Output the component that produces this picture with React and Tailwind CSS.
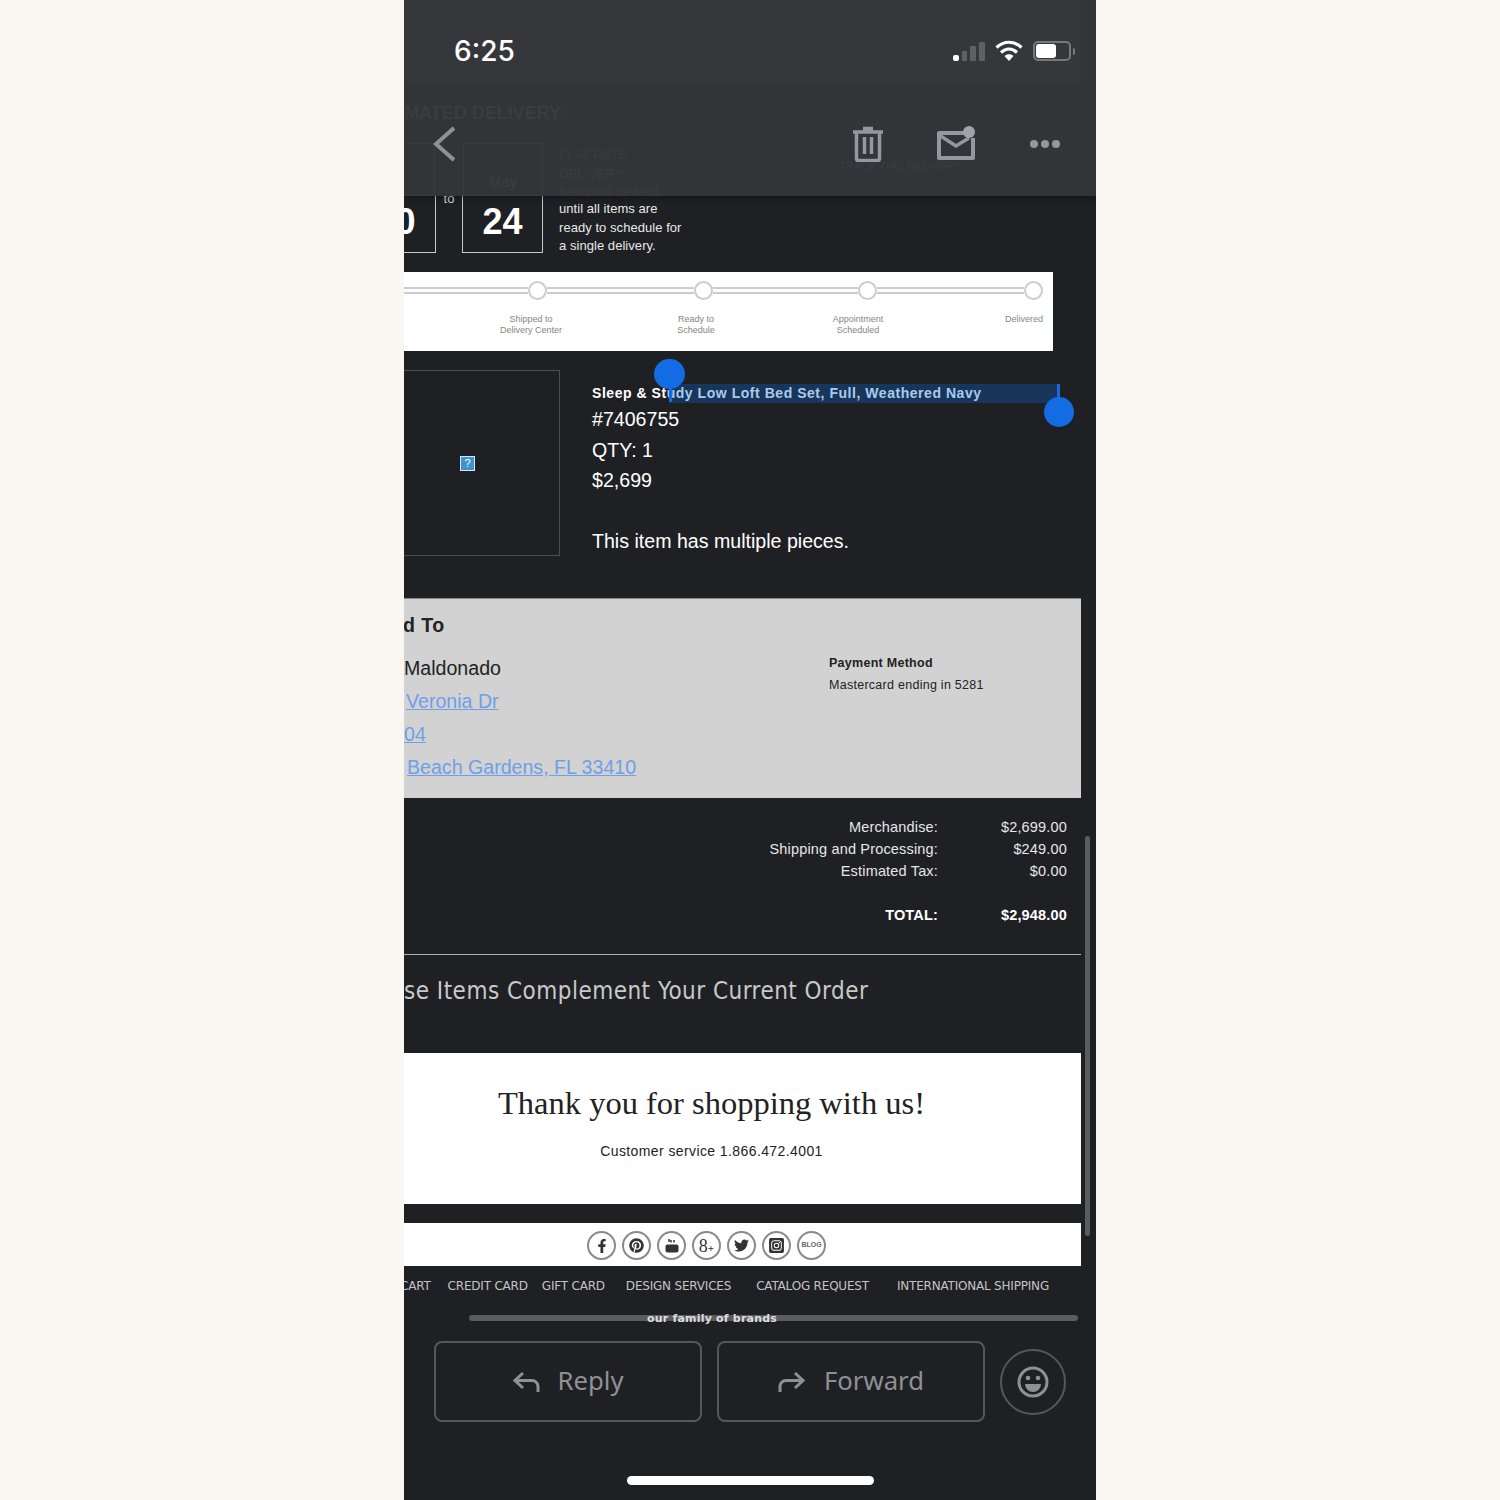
import React from 'react';
import {FaFacebookF, FaPinterest, FaTwitter, FaInstagramSquare} from 'react-icons/fa';

const arial = 'font-["Liberation_Sans",Arial,sans-serif]';

function StatusIcons() {
    return (
        <div className="flex items-end mb-[2px]">
            <div className="flex items-end gap-[3px] h-[20px]">
                <div className="w-[6px] h-[6px] rounded-[2px] bg-white"/>
                <div className="w-[5px] h-[10px] rounded-[1px] bg-[#5f6064]"/>
                <div className="w-[6px] h-[15px] rounded-[1px] bg-[#5f6064]"/>
                <div className="w-[6px] h-[19px] rounded-[1px] bg-[#5f6064]"/>
            </div>
            <svg width="28" height="21" viewBox="0 0 28 21" className="ml-[10px]">
                <path d="M1.500 7.500C9 .5 19 .5 26.500 7.500" fill="none" stroke="#fff" strokeWidth="3.200"/>
                <path d="M6 12.500C11 8 17 8 22 12.500" fill="none" stroke="#fff" strokeWidth="3.200"/>
                <path d="M9.500 16 14 21l4.500-5c-2.600-2.200-6.400-2.200-9 0z" fill="#fff"/>
            </svg>
            <div className="ml-[10px] w-[38px] h-[20px] rounded-[5px] border-2 border-[#77787c] p-[1px]">
                <div className="w-[20px] h-full rounded-[3px] bg-white"/>
            </div>
            <div className="ml-[2px] mb-[6px] w-[2px] h-[7px] rounded-r-sm bg-[#77787c]"/>
        </div>
    );
}

function Header() {
    return (
        <header className="relative h-[196px] shrink-0 bg-[#323438] shadow-[0_2px_6px_rgba(0,0,0,0.35)] z-10">
            {/* what scrolled under the bar shows through very faintly */}
            <div className={`absolute left-0 top-[100px] text-[18px] leading-[26px] font-bold text-[#3a3c40] ${arial}`}>MATED DELIVERY:</div>
            <div className="absolute left-[-20px] top-[143px] w-[51px] h-[53px] border border-[#393b3f]"/>
            <div className={`absolute left-[59px] top-[143px] w-[80px] h-[53px] border border-[#393b3f] text-center text-[15px] text-[#3d3f43] pt-[27px] ${arial}`}>May</div>
            <div className={`absolute left-[155px] top-[146px] text-[13px] leading-[18.5px] text-[#3a3c40] ${arial}`}>
                FLAT RATE<br/>DELIVERY:<br/>Items will be held
            </div>
            <div className={`absolute left-[435px] top-[158px] text-[11px] text-[#3a3c40] ${arial}`}>TRACK THIS DELIVERY</div>

            <div className="relative flex items-center justify-between w-[677px] h-[82px] pl-[50px] pr-[6px] pt-[20px] bg-[#36373b]">
                <span className='text-[28px] font-medium text-white font-["Inter",sans-serif]'>6:25</span>
                <StatusIcons/>
            </div>
            <div className="relative flex items-center h-[114px] pt-[10px] pl-[28px] pr-[36px]">
                <svg width="26" height="38" viewBox="0 0 26 38">
                    <path d="M22 3 4 19l18 16" fill="none" stroke="#8f9094" strokeWidth="4"/>
                </svg>
                <svg width="32" height="36" viewBox="0 0 32 36" className="ml-auto">
                    <path d="M11 2.500h10M1 6h30" stroke="#96979c" strokeWidth="3.500"/>
                    <path d="M4.500 7v25.500a2 2 0 0 0 2 2h19a2 2 0 0 0 2-2V7" fill="none" stroke="#96979c" strokeWidth="3.500"/>
                    <path d="M12.500 11v17M19.500 11v17" stroke="#96979c" strokeWidth="3.500"/>
                </svg>
                <svg width="38" height="34" viewBox="0 0 38 34" className="ml-[53px] mt-[-2px]">
                    <path d="M28 7H2v25h34V12" fill="none" stroke="#96979c" strokeWidth="4" strokeLinejoin="round"/>
                    <path d="M2 9l17 11 13-8" fill="none" stroke="#96979c" strokeWidth="3.500"/>
                    <circle cx="32" cy="6" r="6" fill="#a2a3a8"/>
                </svg>
                <div className="flex gap-[3px] ml-[55px]">
                    <div className="w-[8px] h-[8px] rounded-full bg-[#96979c]"/>
                    <div className="w-[8px] h-[8px] rounded-full bg-[#96979c]"/>
                    <div className="w-[8px] h-[8px] rounded-full bg-[#96979c]"/>
                </div>
            </div>
        </header>
    );
}

function DeliveryRow() {
    return (
        <div className={`flex h-[57px] shrink-0 text-white ${arial}`}>
            <div className="flex items-center justify-center w-[81px] ml-[-49px] pl-[20px] pb-[5px] border-x border-b border-[#c9c9c9] text-[36px] font-bold">0</div>
            <div className="w-[26px] mt-[-6px] text-center text-[13px] leading-[18px] text-[#cfcfcf]">to</div>
            <div className="flex items-center justify-center w-[81px] pb-[5px] border-x border-b border-[#c9c9c9] text-[36px] font-bold">24</div>
            <div className="ml-[16px] pt-[4px] text-[13px] leading-[18.5px] tracking-[0.05px] text-[#e8e8e8]">
                until all items are<br/>ready to schedule for<br/>a single delivery.
            </div>
        </div>
    );
}

function ProgressCard() {
    const dot = 'w-[19px] h-[19px] shrink-0 rounded-full border-2 border-[#cccccc] bg-white';
    const rail = 'h-[7px] border-y-2 border-[#cccccc]';
    return (
        <div className={`mt-[19px] h-[79px] w-[649px] shrink-0 bg-white pt-[9px] text-[9px] leading-[10.5px] text-[#858585] ${arial}`}>
            <div className="flex items-center pr-[10px]">
                <div className={`${rail} w-[124px]`}/>
                <div className={dot}/>
                <div className={`${rail} w-[147px]`}/>
                <div className={dot}/>
                <div className={`${rail} w-[146px]`}/>
                <div className={dot}/>
                <div className={`${rail} w-[147px]`}/>
                <div className={dot}/>
            </div>
            <div className="flex mt-[14px] text-center">
                <div className="w-[100px] ml-[77px]">Shipped to<br/>Delivery Center</div>
                <div className="w-[100px] ml-[65px]">Ready to<br/>Schedule</div>
                <div className="w-[100px] ml-[62px]">Appointment<br/>Scheduled</div>
                <div className="w-[100px] ml-[35px] text-right">Delivered</div>
            </div>
        </div>
    );
}

function ItemRow() {
    return (
        <div className={`relative flex mt-[19px] h-[186px] shrink-0 text-white ${arial}`}>
            {/* selection band goes under the title */}
            <div className="absolute left-[265px] top-[14px] w-[390px] h-[19px] bg-[#17365a]"/>
            <div className="flex items-center justify-center w-[156px] h-full border-y border-r border-[#4c4d50] pr-[28px]">
                <div className="flex items-center justify-center w-[15px] h-[15px] border border-[#d8e6f2] bg-[#3f94cf] text-[11px] leading-none text-white">?</div>
            </div>
            <div className="relative ml-[32px]">
                <div className="mt-[14px] h-[18px] text-[14px] leading-[18px] font-bold tracking-[0.54px]">
                    Sleep &amp; St<span className="text-[#a9cbef]">udy Low Loft Bed Set, Full, Weathered Navy</span>
                </div>
                <div className="mt-[2px] text-[19.6px] leading-[30.5px]">#7406755<br/>QTY: 1<br/>$2,699</div>
                <div className="mt-[30px] text-[19.6px] leading-[30px]">This item has multiple pieces.</div>
            </div>
            {/* drag handles of the selection */}
            <div className="absolute left-[265px] top-[4px] w-[3px] h-[28px] bg-[#136ce3]"/>
            <div className="absolute left-[250px] top-[-11px] w-[31px] h-[30px] rounded-full bg-[#136ce3]"/>
            <div className="absolute left-[653px] top-[14px] w-[3px] h-[22px] bg-[#136ce3]"/>
            <div className="absolute left-[640px] top-[27px] w-[30px] h-[30px] rounded-full bg-[#136ce3]"/>
        </div>
    );
}

function ShipPanel() {
    const link = 'text-[#6f9fe8] underline';
    return (
        <div className={`flex mt-[42px] h-[200px] w-[677px] shrink-0 bg-[#d2d2d2] border-t border-[#8a8a8a] text-[#222] ${arial}`}>
            <div className="w-[425px] text-[19.6px] leading-[33px]">
                <div className="mt-[10px] ml-[-1px] font-bold leading-[33px] tracking-[0.45px]">d To</div>
                <div className="mt-[10px]">Maldonado</div>
                <div className={`pl-[2px] ${link}`}>Veronia Dr</div>
                <div className={link}>04</div>
                <div className={`pl-[3px] ${link}`}>Beach Gardens, FL 33410</div>
            </div>
            <div className="pt-[53px] text-[12.5px] leading-[22px] tracking-[0.27px]">
                <div className="font-bold">Payment Method</div>
                <div>Mastercard ending in 5281</div>
            </div>
        </div>
    );
}

function Totals() {
    const rows = [
        ['Merchandise:', '$2,699.00'],
        ['Shipping and Processing:', '$249.00'],
        ['Estimated Tax:', '$0.00'],
    ];
    return (
        <div className={`pt-[18px] pr-[29px] shrink-0 text-[14.5px] leading-[22px] tracking-[0.17px] text-[#e6e6e6] ${arial}`}>
            {rows.map(([label, value]) => (
                <div key={label} className="grid grid-cols-[1fr_129px] text-right">
                    <span>{label}</span>
                    <span>{value}</span>
                </div>
            ))}
            <div className="grid grid-cols-[1fr_129px] text-right mt-[22px] font-bold text-white">
                <span>TOTAL:</span>
                <span>$2,948.00</span>
            </div>
        </div>
    );
}

function SocialIcon({children}) {
    return (
        <div className="flex items-center justify-center w-[29px] h-[29px] rounded-full border-2 border-[#8a8a8a] text-[#333]">
            {children}
        </div>
    );
}

function SocialBar() {
    return (
        <div className="flex items-center h-[43px] w-[677px] mt-[19px] pt-[2px] shrink-0 bg-white pl-[183px] gap-[6px]">
            <SocialIcon><FaFacebookF size={14}/></SocialIcon>
            <SocialIcon><FaPinterest size={15}/></SocialIcon>
            <SocialIcon>
                <svg width="16" height="16" viewBox="0 0 16 16">
                    <path d="M5 1v3M7 2v2.500M10 2v2.500" stroke="#333" strokeWidth="1.500"/>
                    <rect x="1.500" y="6.500" width="13" height="8" rx="2" fill="#333"/>
                </svg>
            </SocialIcon>
            <SocialIcon>
                <span className='text-[18px] leading-none font-["Liberation_Serif",serif]'>8<span className="text-[11px] font-bold">+</span></span>
            </SocialIcon>
            <SocialIcon><FaTwitter size={15}/></SocialIcon>
            <SocialIcon><FaInstagramSquare size={17}/></SocialIcon>
            <SocialIcon><span className={`text-[7px] font-bold text-[#666] ${arial}`}>BLOG</span></SocialIcon>
        </div>
    );
}

function ActionButton({label, flip}) {
    return (
        <div className={`flex items-center justify-center w-[268px] h-[81px] rounded-lg border-2 border-[#56575b] text-[25.7px] text-[#8f9094] font-["Noto_Sans",sans-serif] ${flip ? 'gap-[19px]' : 'gap-[18px]'}`}>
            <svg width="27" height="22" viewBox="0 0 27 22" className={flip ? '-scale-x-100' : ''}>
                <path d="M10 2 2 9.500l8 7.500M3 9.500h16a6 6 0 0 1 6 6V21" fill="none" stroke="#8f9094" strokeWidth="3"/>
            </svg>
            <span>{label}</span>
        </div>
    );
}

function App() {
    return (
        <div className="flex justify-center w-[1500px] h-[1500px] bg-[#faf6f2]">
            <div className="relative flex flex-col w-[692px] h-[1500px] overflow-hidden bg-[#1f2024]">
                <Header/>
                <DeliveryRow/>
                <ProgressCard/>
                <ItemRow/>
                <ShipPanel/>
                <Totals/>
                <div className="mt-[28px] w-[677px] h-px shrink-0 bg-[#b0b0b0]"/>
                <div className='mt-[19px] h-[34px] shrink-0 text-[24px] leading-[34px] tracking-[0.48px] text-[#c9c9c9] font-["DejaVu_Sans",sans-serif] [font-stretch:condensed]'>
                    se Items Complement Your Current Order
                </div>
                <div className={`flex flex-col items-center mt-[45px] h-[151px] w-[677px] shrink-0 bg-white pr-[62px] text-[#222] ${arial}`}>
                    <div className='mt-[28px] text-[32.5px] leading-[44px] font-["Liberation_Serif",serif]'>Thank you for shopping with us!</div>
                    <div className="mt-[17px] text-[14px] leading-[18px] tracking-[0.4px]">Customer service 1.866.472.4001</div>
                </div>
                <SocialBar/>
                <div className='relative flex mt-[12px] ml-[-4px] h-[16px] shrink-0 text-[12px] leading-[16px] text-[#c4c4c4] whitespace-nowrap font-["DejaVu_Sans",sans-serif] tracking-[-0.2px]'>
                    <span>CART</span>
                    <span className="ml-[17px]">CREDIT CARD</span>
                    <span className="ml-[14px]">GIFT CARD</span>
                    <span className="ml-[21px]">DESIGN SERVICES</span>
                    <span className="ml-[25px]">CATALOG REQUEST</span>
                    <span className="ml-[28px]">INTERNATIONAL SHIPPING</span>
                </div>
                {/* horizontal scrollbar, the heading sits over it */}
                <div className="relative ml-[65px] mt-[21px] w-[609px] h-[6px] shrink-0 rounded-full bg-[#5b5c60]">
                    <span className='absolute left-[178px] top-[-4px] text-[11px] leading-[16px] tracking-[0.2px] font-bold text-[#dedede] whitespace-nowrap font-["DejaVu_Sans",sans-serif]'>our family of brands</span>
                </div>
                <div className="flex items-center ml-[30px] mt-[20px] shrink-0">
                    <ActionButton label="Reply"/>
                    <div className="ml-[15px]"><ActionButton label="Forward" flip/></div>
                    <div className="flex items-center justify-center ml-[15px] w-[66px] h-[66px] rounded-full border-2 border-[#56575b]">
                        <svg width="32" height="32" viewBox="0 0 32 32">
                            <circle cx="16" cy="16" r="14" fill="none" stroke="#8f9094" strokeWidth="3"/>
                            <circle cx="11" cy="12" r="2.300" fill="#8f9094"/>
                            <circle cx="21" cy="12" r="2.300" fill="#8f9094"/>
                            <path d="M8 18h16a8 8 0 0 1-16 0z" fill="#8f9094"/>
                        </svg>
                    </div>
                </div>
                <div className="mt-[54px] ml-[223px] w-[247px] h-[9px] shrink-0 rounded-full bg-white"/>
                {/* vertical scrollbar over the mail body */}
                <div className="absolute left-[681px] top-[836px] w-[5px] h-[400px] rounded-full bg-[#5b5c60]"/>
            </div>
        </div>
    );
}

export default App;
